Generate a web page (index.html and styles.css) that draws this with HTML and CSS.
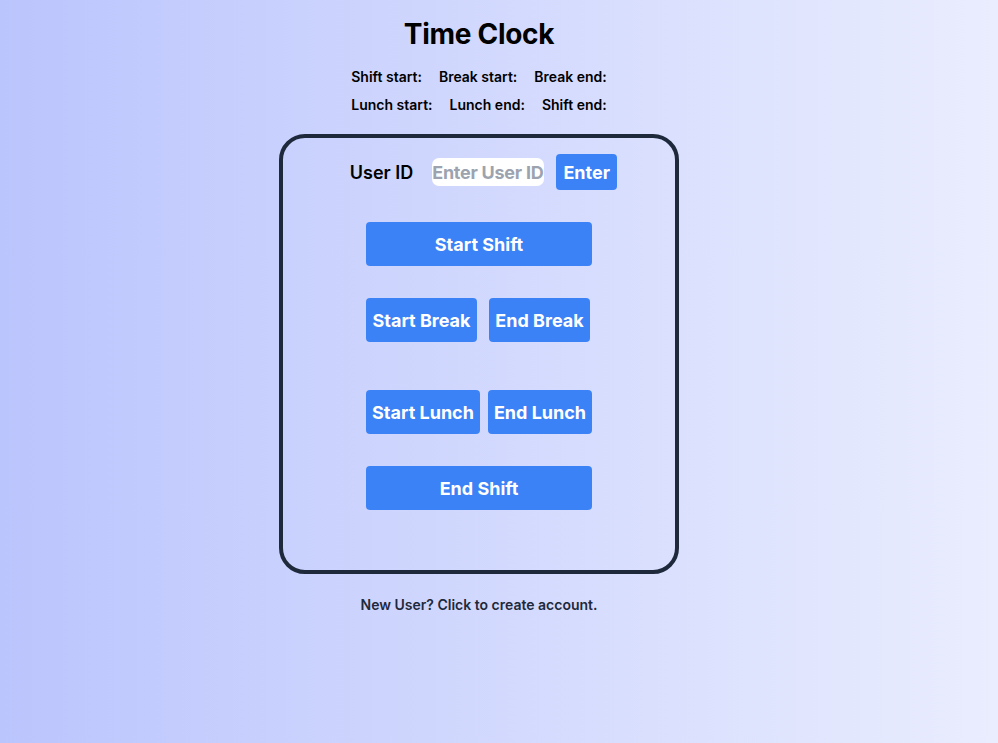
FILE: index.html
```html
<!DOCTYPE html>
<html>
<head>
<meta charset="utf-8">
<link rel="stylesheet" href="styles.css">
</head>
<body>
<main class="page">
  <h1 class="title">Time Clock</h1>
  <div class="times">
    <div class="times-row">
      <span>Shift start:</span><span>Break start:</span><span>Break end:</span>
    </div>
    <div class="times-row">
      <span>Lunch start:</span><span>Lunch end:</span><span>Shift end:</span>
    </div>
  </div>
  <section class="card">
    <div class="login-row">
      <label class="uid-label">User ID</label>
      <input class="uid-input" type="text" placeholder="Enter User ID">
      <button class="btn btn-enter">Enter</button>
    </div>
    <button class="btn btn-wide btn-start-shift">Start Shift</button>
    <div class="pair pair-break">
      <button class="btn btn-start-break">Start Break</button>
      <button class="btn btn-end-break">End Break</button>
    </div>
    <div class="pair pair-lunch">
      <button class="btn btn-start-lunch">Start Lunch</button>
      <button class="btn btn-end-lunch">End Lunch</button>
    </div>
    <button class="btn btn-wide btn-end-shift">End Shift</button>
  </section>
  <p class="footer">New User? Click to create account.</p>
</main>
</body>
</html>
```
FILE: styles.css
```css
* { box-sizing: border-box; }
html, body { margin: 0; padding: 0; }
body {
  min-height: 743px;
  background: linear-gradient(to right, #bbc5fd, #eaedfe);
  font-family: Inter, "Noto Sans", sans-serif;
  color: #000;
}
.page {
  display: flex;
  flex-direction: column;
  align-items: center;
  padding-top: 16px;
  padding-right: 40px;
}
.title {
  margin: 0;
  font-size: 28px;
  line-height: 36px;
  font-weight: 700;
  letter-spacing: -0.3px;
}
.times {
  margin-top: 11px;
  display: flex;
  flex-direction: column;
  align-items: center;
}
.times-row {
  display: flex;
  gap: 17px;
  font-size: 14px;
  font-weight: 600;
  line-height: 28px;
}
.card {
  margin-top: 15px;
  width: 400px;
  height: 440px;
  border: 4px solid #1e293b;
  border-radius: 26px;
  display: flex;
  flex-direction: column;
  align-items: center;
  padding-top: 16px;
  background: transparent;
}
.login-row {
  display: flex;
  align-items: center;
  height: 36px;
  margin-left: 9px;
}
.uid-label {
  font-size: 18px;
  font-weight: 600;
  margin-right: 19px;
}
.uid-input {
  width: 112px;
  height: 28px;
  border: none;
  border-radius: 7px;
  background: #fff;
  font-family: inherit;
  font-size: 18px;
  font-weight: 700;
  letter-spacing: -0.25px;
  padding: 0;
  outline: none;
  margin-right: 12px;
  text-align: left;
}
.uid-input::placeholder { color: #9ca3af; }
.btn {
  border: none;
  background: #3b82f6;
  color: #fff;
  font-family: inherit;
  font-size: 18px;
  font-weight: 700;
  border-radius: 4px;
  height: 44px;
  padding: 0;
  cursor: pointer;
}
.btn-enter {
  width: 61px;
  height: 36px;
}
.btn-wide { width: 226px; }
.btn-start-shift { margin-top: 32px; }
.pair {
  display: flex;
  width: 226px;
}
.pair-break { margin-top: 32px; gap: 12px; }
.pair-lunch { margin-top: 48px; gap: 8px; }
.btn-start-break { width: 111px; }
.btn-end-break { width: 101px; }
.btn-start-lunch { width: 114px; }
.btn-end-lunch { width: 104px; }
.btn-end-shift { margin-top: 32px; }
.footer {
  margin: 21px 0 0;
  font-size: 14px;
  font-weight: 600;
  color: #1e293b;
  line-height: 20px;
}
```
